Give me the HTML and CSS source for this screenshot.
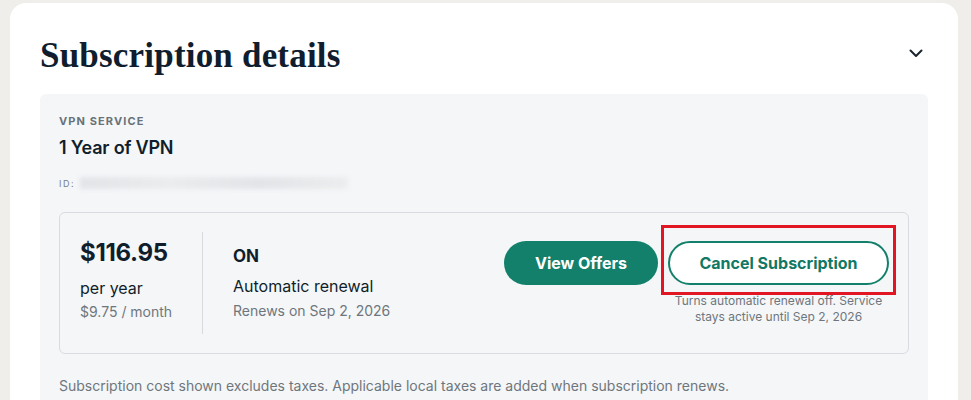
FILE: index.html
```html
<!DOCTYPE html>
<html lang="en">
<head>
  <meta charset="UTF-8" />
  <meta name="viewport" content="width=device-width, initial-scale=1.0"/>
  <title>Subscription details</title>
  <link rel="stylesheet" href="styles.css">
</head>
<body>
  <section class="card">
    <div class="card-head">
      <h1>Subscription details</h1>
      <button class="toggle" aria-label="Collapse">
        <svg width="14" height="9" viewBox="0 0 14 9"><path d="M1.5 1.5 L7 7 L12.5 1.5" fill="none" stroke="#1b2530" stroke-width="2" stroke-linecap="round" stroke-linejoin="round"/></svg>
      </button>
    </div>

    <div class="panel">
      <p class="eyebrow">VPN SERVICE</p>
      <h2 class="plan">1 Year of VPN</h2>
      <div class="id-row">
        <span class="id-label">ID:</span>
        <span class="id-value"></span>
      </div>

      <div class="box">
        <div class="price">
          <strong class="amount">$116.95</strong>
          <span class="period">per year</span>
          <span class="monthly">$9.75 / month</span>
        </div>

        <div class="renewal">
          <strong class="state">ON</strong>
          <span class="label">Automatic renewal</span>
          <span class="date">Renews on Sep 2, 2026</span>
        </div>

        <div class="actions">
          <button class="btn btn-fill">View Offers</button>
          <div class="cancel">
            <button class="btn btn-line">Cancel Subscription</button>
            <span class="highlight"></span>
            <p class="hint">Turns automatic renewal off. Service stays active until Sep 2, 2026</p>
          </div>
        </div>
      </div>

      <p class="note">Subscription cost shown excludes taxes. Applicable local taxes are added when subscription renews.</p>
    </div>
  </section>
</body>
</html>
```

FILE: styles.css
```css
*,
*::before,
*::after {
  margin: 0;
  padding: 0;
  box-sizing: border-box;
}

body {
  background-color: rgb(239, 238, 234);
  font-family: Inter, "Noto Sans", Arial, sans-serif;
  color: rgb(16, 30, 44);
  padding: 3px 13px 0 10px;
  height: 400px;
  overflow: hidden;
}

.card {
  background-color: #fff;
  border-radius: 16px;
  padding: 30px 30px 40px;
  min-height: 420px;
}

.card-head {
  display: flex;
  align-items: center;
  justify-content: space-between;
  height: 44px;
  margin-bottom: 17px;
}

.card-head h1 {
  font-family: "Liberation Serif", "Times New Roman", serif;
  font-size: 35px;
  font-weight: bold;
  color: rgb(15, 29, 46);
  letter-spacing: 0.2px;
  margin-top: 2px;
}

.toggle {
  background: none;
  border: none;
  width: 20px;
  height: 20px;
  margin-right: 2px;
  margin-top: -4px;
  display: flex;
  align-items: center;
  justify-content: center;
}

.panel {
  background-color: rgb(245, 246, 248);
  border-radius: 6px;
  padding: 19px 19px 20px;
}

.eyebrow {
  font-size: 11px;
  font-weight: 700;
  letter-spacing: 1.1px;
  color: rgb(104, 114, 120);
  line-height: 16px;
}

.plan {
  font-size: 18px;
  font-weight: 600;
  line-height: 22px;
  margin-top: 8px;
  letter-spacing: -0.2px;
}

.id-row {
  display: flex;
  align-items: center;
  margin-top: 17px;
  height: 14px;
}

.id-label {
  font-size: 9px;
  letter-spacing: 1.5px;
  color: rgb(120, 128, 134);
  width: 21px;
}

.id-value {
  display: block;
  width: 268px;
  height: 12px;
  background: linear-gradient(to right, rgb(226, 228, 231), rgb(234, 236, 238), rgb(226, 228, 231), rgb(236, 237, 239));
  filter: blur(2px);
}

.box {
  display: flex;
  align-items: stretch;
  margin-top: 22px;
  border: 1px solid rgb(216, 219, 223);
  border-radius: 6px;
  padding: 19px 19px 19px 20px;
  min-height: 142px;
}

.price,
.renewal {
  display: flex;
  flex-direction: column;
  white-space: nowrap;
}

.price {
  padding-right: 30px;
  width: 122px;
  flex: none;
}

.amount {
  font-size: 24px;
  font-weight: 700;
  letter-spacing: -0.3px;
  line-height: 30px;
  margin-top: 6px;
}

.period {
  font-size: 16px;
  margin-top: 9px;
  line-height: 22px;
}

.monthly {
  font-size: 14px;
  color: rgb(110, 118, 125);
  margin-top: 3px;
  line-height: 20px;
}

.renewal {
  border-left: 1px solid rgb(214, 217, 221);
  padding-left: 30px;
}

.state {
  font-size: 17px;
  font-weight: 700;
  line-height: 22px;
  margin-top: 13px;
}

.label {
  font-size: 16px;
  margin-top: 8px;
  line-height: 22px;
}

.date {
  font-size: 14px;
  color: rgb(110, 118, 125);
  margin-top: 4px;
  line-height: 20px;
}

.actions {
  margin-left: auto;
  display: flex;
  align-items: flex-start;
  gap: 10px;
  padding-top: 9px;
}

.btn {
  font-family: Inter, "Noto Sans", Arial, sans-serif;
  font-size: 16px;
  font-weight: 700;
  height: 44px;
  border-radius: 22px;
  cursor: pointer;
}

.btn-fill {
  background-color: rgb(18, 128, 106);
  color: #fff;
  border: none;
  width: 154px;
}

.btn-line {
  background-color: #fff;
  color: rgb(18, 120, 100);
  border: 2px solid rgb(18, 128, 106);
  width: 221px;
}

.cancel {
  position: relative;
  display: flex;
  flex-direction: column;
  align-items: center;
}

.highlight {
  position: absolute;
  top: -16px;
  left: -7px;
  right: -7px;
  height: 70px;
  border: 3px solid rgb(226, 22, 35);
}

.hint {
  font-size: 12px;
  line-height: 16px;
  color: rgb(110, 118, 125);
  text-align: center;
  width: 215px;
  margin-top: 8px;
}

.note {
  font-size: 14px;
  color: rgb(110, 118, 125);
  margin-top: 22px;
  line-height: 20px;
}
```
